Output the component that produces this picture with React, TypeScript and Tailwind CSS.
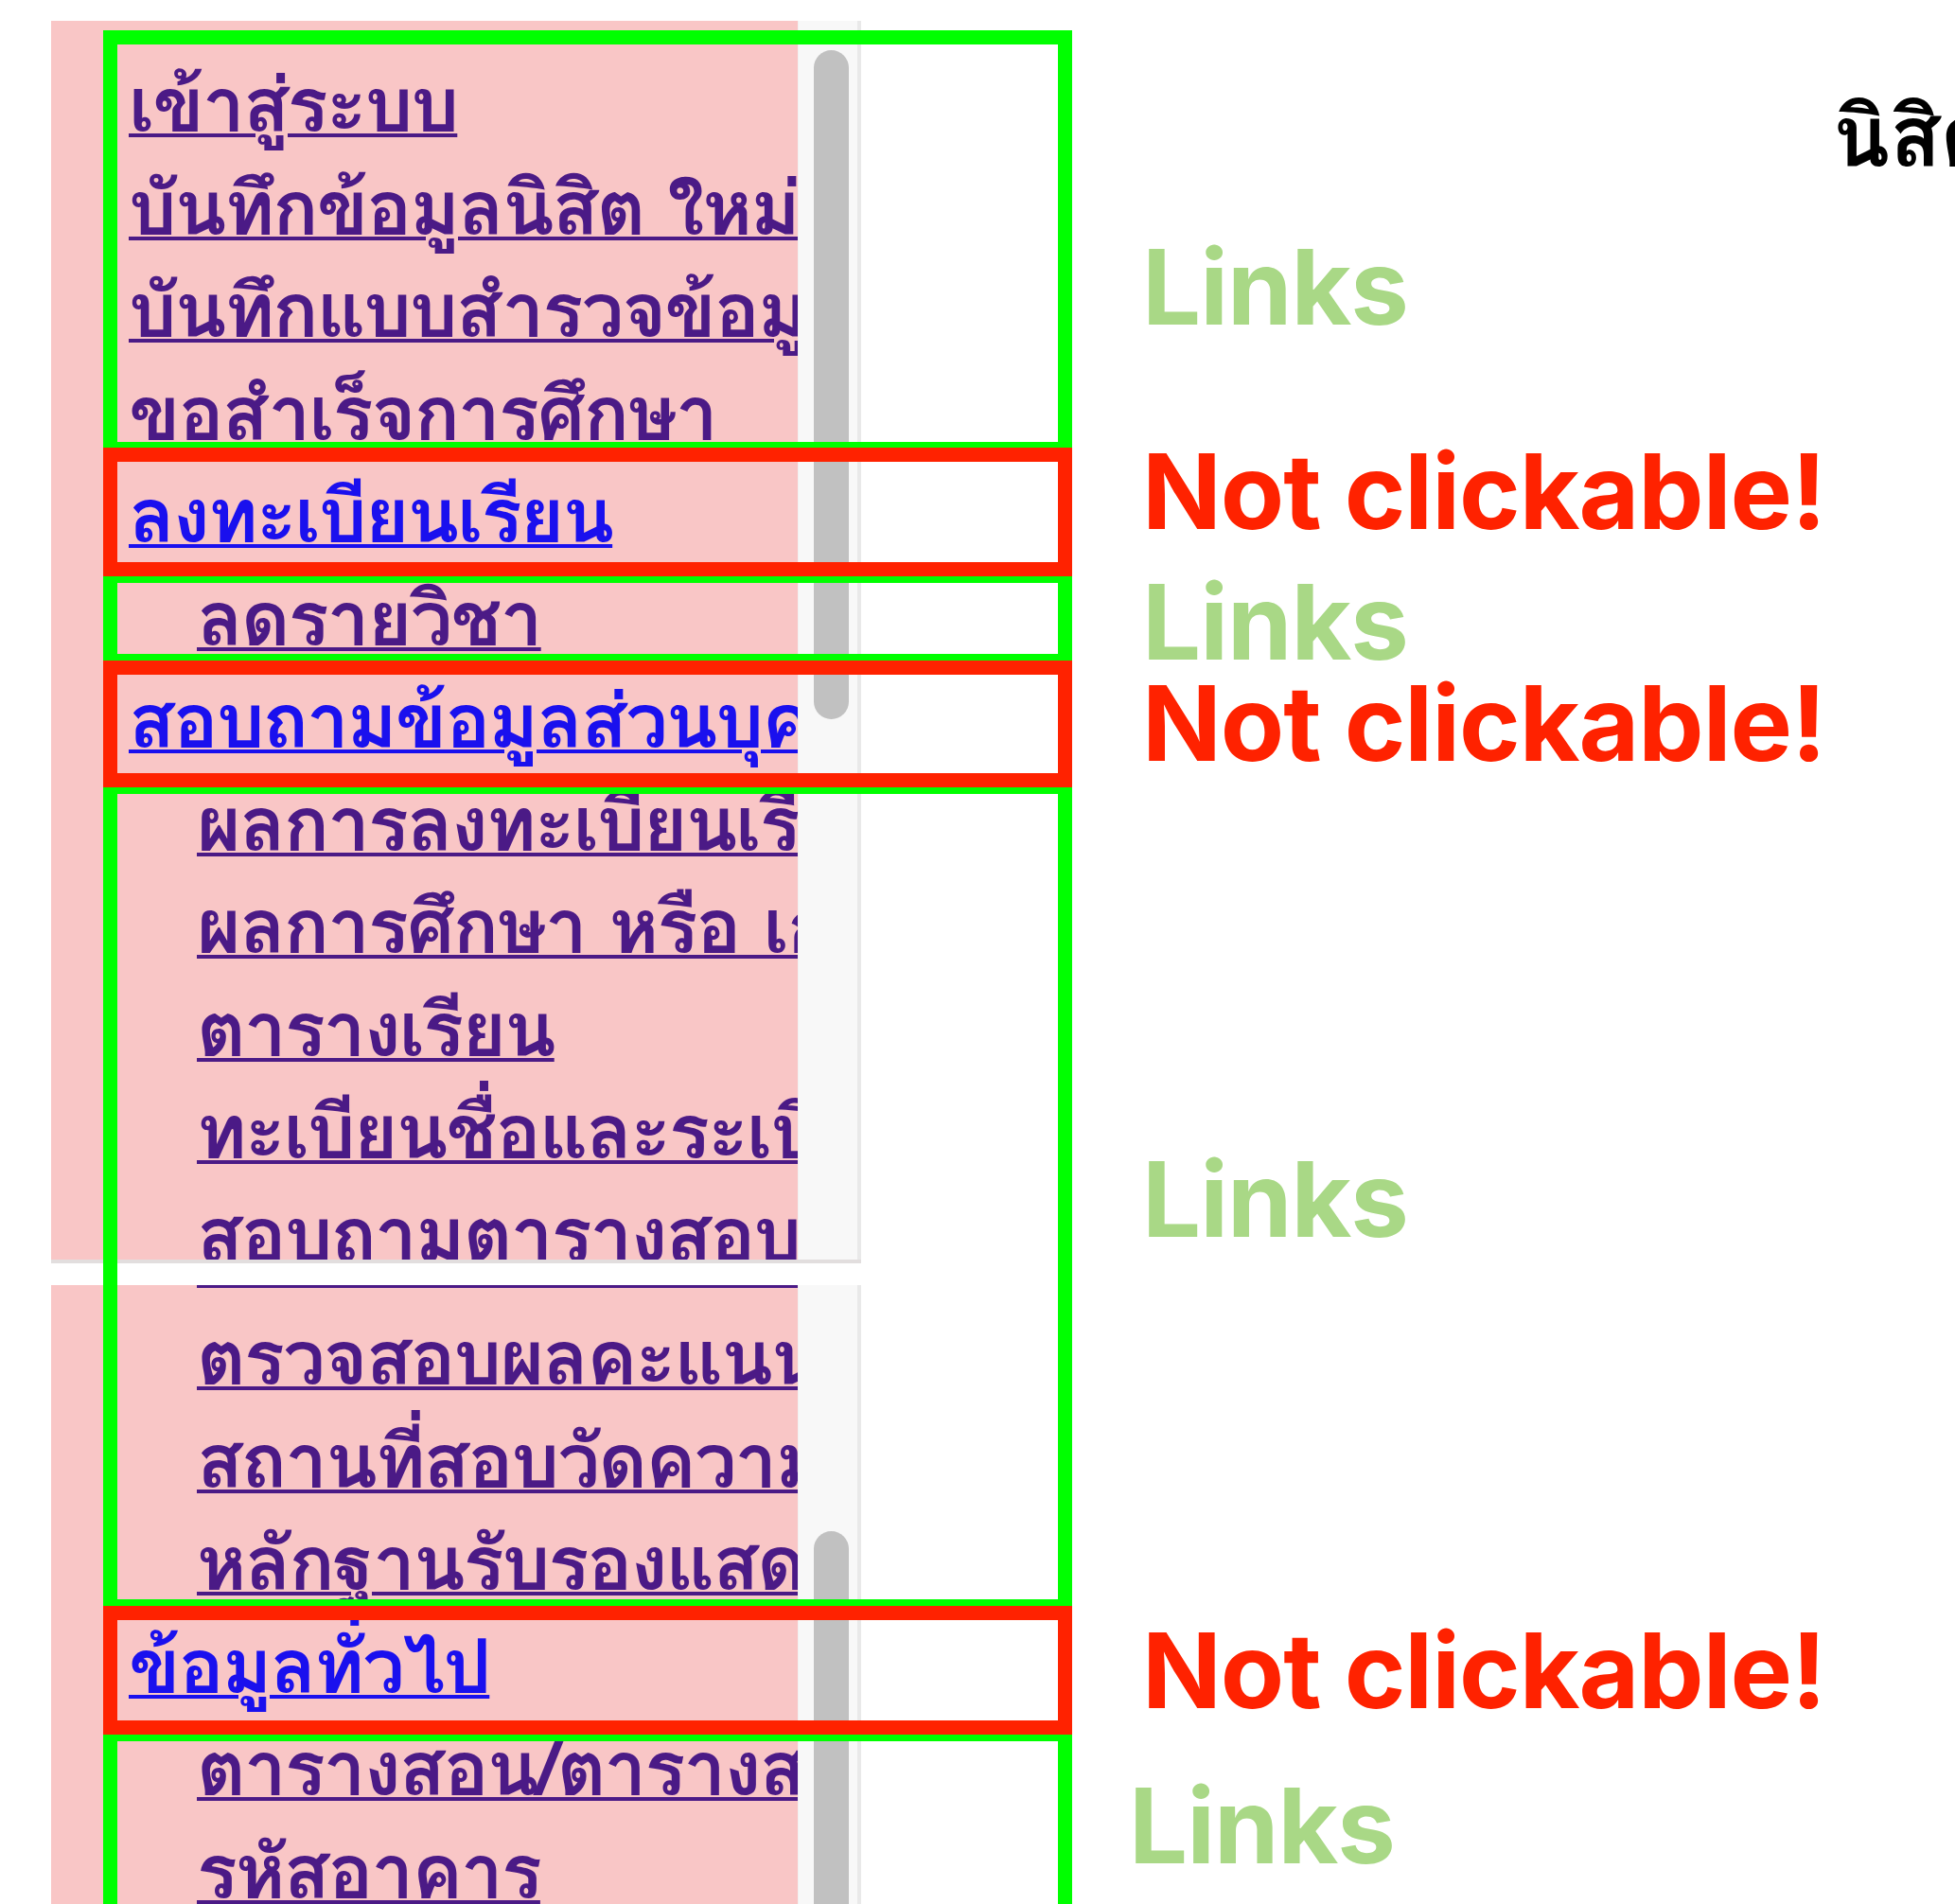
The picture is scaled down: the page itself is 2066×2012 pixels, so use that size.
import React from "react";

type Item = { text: string; sub?: boolean; blue?: boolean };

const items: Item[] = [
  { text: "เข้าสู่ระบบ" },
  { text: "บันทึกข้อมูลนิสิต ใหม่" },
  { text: "บันทึกแบบสำรวจข้อมูลนิสิต" },
  { text: "ขอสำเร็จการศึกษา" },
  { text: "ลงทะเบียนเรียน", blue: true },
  { text: "ลดรายวิชา", sub: true },
  { text: "สอบถามข้อมูลส่วนบุคคล", blue: true },
  { text: "ผลการลงทะเบียนเรียน", sub: true },
  { text: "ผลการศึกษา หรือ เกรดเฉลี่ย", sub: true },
  { text: "ตารางเรียน", sub: true },
  { text: "ทะเบียนชื่อและระเบียนประวัติ", sub: true },
  { text: "สอบถามตารางสอบ", sub: true },
  { text: "ตรวจสอบผลคะแนนสอบ", sub: true },
  { text: "สถานที่สอบวัดความรู้", sub: true },
  { text: "หลักฐานรับรองแสดงผล", sub: true },
  { text: "ข้อมูลทั่วไป", blue: true },
  { text: "ตารางสอน/ตารางสอบ", sub: true },
  { text: "รหัสอาคาร", sub: true },
];

function MenuList() {
  return (
    <ul className="flex flex-col pt-[35px] font-['Loma','Noto_Sans_Thai','Garuda','DejaVu_Sans',sans-serif] font-bold text-[80px] tracking-[-2px] leading-[108.5px]">
      {items.map((it, i) => (
        <li
          key={i}
          className={`whitespace-nowrap ${it.sub ? "pl-[154px]" : "pl-[82px]"}`}
        >
          <a
            className={`underline decoration-[4px] ${
              it.blue ? "text-[#1a10ee]" : "text-[#4b1a86]"
            }`}
          >
            {it.text}
          </a>
        </li>
      ))}
    </ul>
  );
}

function Frame({
  height,
  listOffset,
  thumbTop,
  thumbHeight,
  bottomLine,
}: {
  height: number;
  listOffset: number;
  thumbTop: number;
  thumbHeight: number;
  bottomLine?: boolean;
}) {
  return (
    <div
      className={`flex shrink-0 w-[856px] overflow-hidden ${bottomLine ? "border-b-[4px] border-[#e2dede]" : ""}`}
      style={{ height }}
    >
      <div className="w-[789px] bg-[#f9c6c6] overflow-hidden">
        <div style={{ marginTop: listOffset }}>
          <MenuList />
        </div>
      </div>
      <div className="w-[67px] bg-[#f8f8f8] border-l border-[#f2f2f2] border-r-[4px] border-r-[#e9e9e9] pl-[16px]">
        <div
          className="w-[37px] rounded-full bg-[#c1c1c1]"
          style={{ marginTop: thumbTop, height: thumbHeight }}
        />
      </div>
    </div>
  );
}

const labelBase =
  "font-['Inter',sans-serif] font-bold text-[110px] leading-[110px] whitespace-nowrap tracking-[-1px]";

export default function App() {
  return (
    <div className="relative w-[2066px] h-[2012px] overflow-hidden bg-white flex">
      <div className="shrink-0 w-[910px] pl-[54px] pt-[22px] flex flex-col">
        <Frame height={1313} listOffset={0} thumbTop={31} thumbHeight={707} bottomLine />
        <div className="h-[23px] shrink-0" />
        <Frame height={700} listOffset={-1314} thumbTop={260} thumbHeight={600} />
      </div>

      <div className="flex flex-col min-w-0">
        <div className="h-[248px] pl-[1027px] pt-[86px]">
          <h1 className="whitespace-nowrap font-['Liberation_Serif','Garuda','Loma',serif] font-bold text-[88px] leading-[120px] text-black">
            นิสิตใหม่
          </h1>
        </div>
        <div className="pl-[297px] flex flex-col">
          <div className={`${labelBase} text-[#a9d886]`}>Links</div>
          <div className={`${labelBase} text-[#ff2200] mt-[106px]`}>Not clickable!</div>
          <div className={`${labelBase} text-[#a9d886] mt-[28px]`}>Links</div>
          <div className={`${labelBase} text-[#ff2200] mt-[-3px]`}>Not clickable!</div>
          <div className={`${labelBase} text-[#a9d886] mt-[393px]`}>Links</div>
          <div className={`${labelBase} text-[#ff2200] mt-[388px]`}>Not clickable!</div>
          <div className={`${labelBase} text-[#a9d886] mt-[54px] ml-[-14px]`}>Links</div>
        </div>
      </div>

      {/* annotation boxes */}
      <div className="absolute left-[109px] top-[32px] w-[1024px] h-[450px] border-[15px] border-[#00ff00]" />
      <div className="absolute left-[109px] top-[601px] w-[1024px] h-[105px] border-[15px] border-[#00ff00]" />
      <div className="absolute left-[109px] top-[824px] w-[1024px] h-[881px] border-[15px] border-[#00ff00]" />
      <div className="absolute left-[109px] top-[1825px] w-[1024px] h-[300px] border-[15px] border-[#00ff00]" />
      <div className="absolute left-[109px] top-[473px] w-[1024px] h-[136px] border-[15px] border-[#ff2200]" />
      <div className="absolute left-[109px] top-[698px] w-[1024px] h-[134px] border-[15px] border-[#ff2200]" />
      <div className="absolute left-[109px] top-[1697px] w-[1024px] h-[136px] border-[15px] border-[#ff2200]" />
    </div>
  );
}
